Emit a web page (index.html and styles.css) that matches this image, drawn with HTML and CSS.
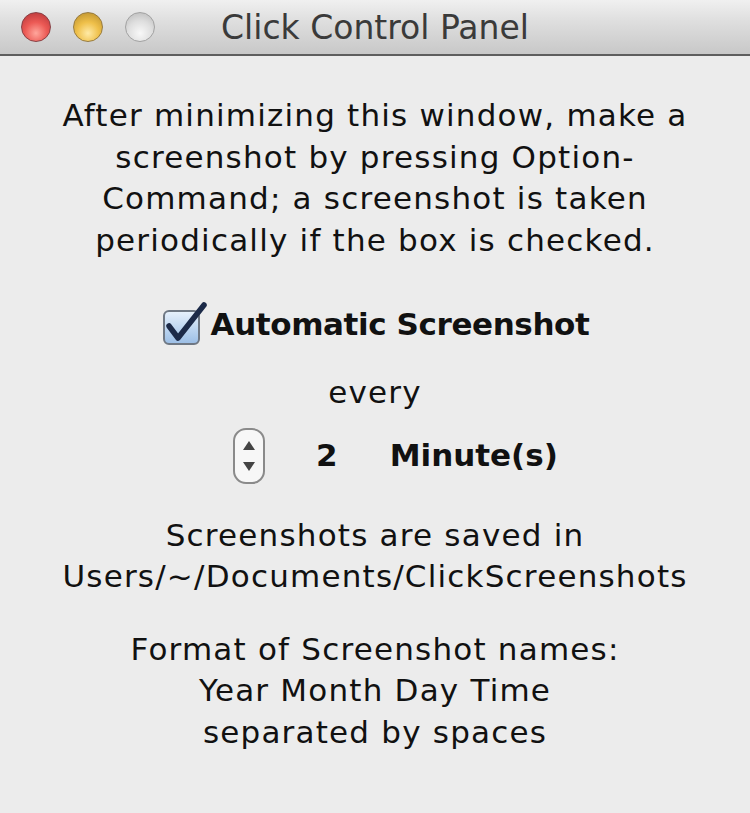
FILE: index.html
```html
<!DOCTYPE html>
<html>
<head>
<meta charset="utf-8">
<link rel="stylesheet" href="styles.css">
</head>
<body>
<div class="window">
  <div class="titlebar">
    <div class="lights">
      <span class="light red"></span>
      <span class="light yellow"></span>
      <span class="light grey"></span>
    </div>
    <div class="title">Click Control Panel</div>
  </div>
  <div class="content">
    <p class="intro">After minimizing this window, make a<br>screenshot by pressing Option-<br>Command; a screenshot is taken<br>periodically if the box is checked.</p>
    <div class="check-row">
      <span class="checkbox">
        <svg class="tick" width="46" height="46" viewBox="0 0 46 46"><path d="M4 24 L13 36 L39 3" fill="none" stroke="#1c2a48" stroke-width="5.5" stroke-linecap="round" stroke-linejoin="round"/></svg>
      </span>
      <span class="check-label">Automatic Screenshot</span>
    </div>
    <div class="every">every</div>
    <div class="interval">
      <span class="stepper">
        <span class="arrow up"></span>
        <span class="arrow down"></span>
      </span>
      <span class="num">2</span>
      <span class="unit">Minute(s)</span>
    </div>
    <p class="info saved">Screenshots are saved in<br>Users/~/Documents/ClickScreenshots</p>
    <p class="info format">Format of Screenshot names:<br>Year Month Day Time<br>separated by spaces</p>
  </div>
</div>
</body>
</html>
```

FILE: styles.css
```css
html, body {
  margin: 0;
  padding: 0;
  background: #ececec;
}
body {
  width: 750px;
  height: 813px;
  overflow: hidden;
  font-family: "DejaVu Sans", "Liberation Sans", sans-serif;
  color: #111;
}
.window {
  display: flex;
  flex-direction: column;
  height: 813px;
}
.titlebar {
  height: 54px;
  background: linear-gradient(#f0f0f0, #dedede 40%, #c8c8c8);
  border-bottom: 2px solid #5e5e5e;
  display: flex;
  align-items: center;
  position: relative;
}
.lights {
  display: flex;
  gap: 22px;
  padding-left: 21px;
}
.light {
  width: 30px;
  height: 30px;
  border-radius: 50%;
  box-sizing: border-box;
}
.red {
  background: radial-gradient(circle at 50% 72%, #ffa69c 0%, #ec5a55 45%, #b03236 100%);
  border: 1px solid #8a4044;
}
.yellow {
  background: radial-gradient(circle at 50% 72%, #ffeaa6 0%, #efc04a 45%, #b48a2a 100%);
  border: 1px solid #977b40;
}
.grey {
  background: radial-gradient(circle at 50% 72%, #f8f8f8 0%, #dedede 50%, #b6b6b6 100%);
  border: 1px solid #a2a2a2;
}
.title {
  position: absolute;
  left: 0;
  right: 0;
  top: 0;
  bottom: 0;
  display: flex;
  align-items: center;
  justify-content: center;
  font-size: 33px;
  color: #3a3a3a;
}
.content {
  display: flex;
  flex-direction: column;
  align-items: center;
  text-align: center;
  padding-top: 39px;
  font-size: 31px;
  line-height: 41.5px;
  letter-spacing: 1.2px;
}
p {
  margin: 0;
}
.check-row {
  display: flex;
  align-items: center;
  margin-top: 43px;
  height: 41px;
  gap: 11px;
  margin-left: 2px;
}
.checkbox {
  width: 37px;
  height: 35px;
  box-sizing: border-box;
  border: 2px solid #6f7884;
  border-radius: 6px;
  background: linear-gradient(#e6f0fb, #bcd5f0 55%, #9dbfe6);
  position: relative;
  margin-top: 6px;
}
.tick {
  position: absolute;
  left: 0;
  top: -10px;
}
.check-label {
  font-weight: bold;
  letter-spacing: -0.4px;
}
.every {
  margin-top: 27px;
}
.interval {
  display: flex;
  align-items: center;
  margin-top: 14px;
  height: 56px;
  margin-left: 41px;
  letter-spacing: 0;
}
.stepper {
  width: 32px;
  height: 56px;
  box-sizing: border-box;
  border: 2px solid #8a8a8a;
  border-radius: 13px;
  background: #f7f7f7;
  display: flex;
  flex-direction: column;
  align-items: center;
  justify-content: center;
  gap: 12px;
}
.arrow {
  width: 0;
  height: 0;
  border-left: 6px solid transparent;
  border-right: 6px solid transparent;
}
.arrow.up {
  border-bottom: 9px solid #444;
}
.arrow.down {
  border-top: 9px solid #444;
}
.num {
  font-weight: bold;
  margin-left: 51px;
}
.unit {
  font-weight: bold;
  margin-left: 52px;
}
.saved {
  margin-top: 31px;
}
.format {
  margin-top: 31px;
}
```
